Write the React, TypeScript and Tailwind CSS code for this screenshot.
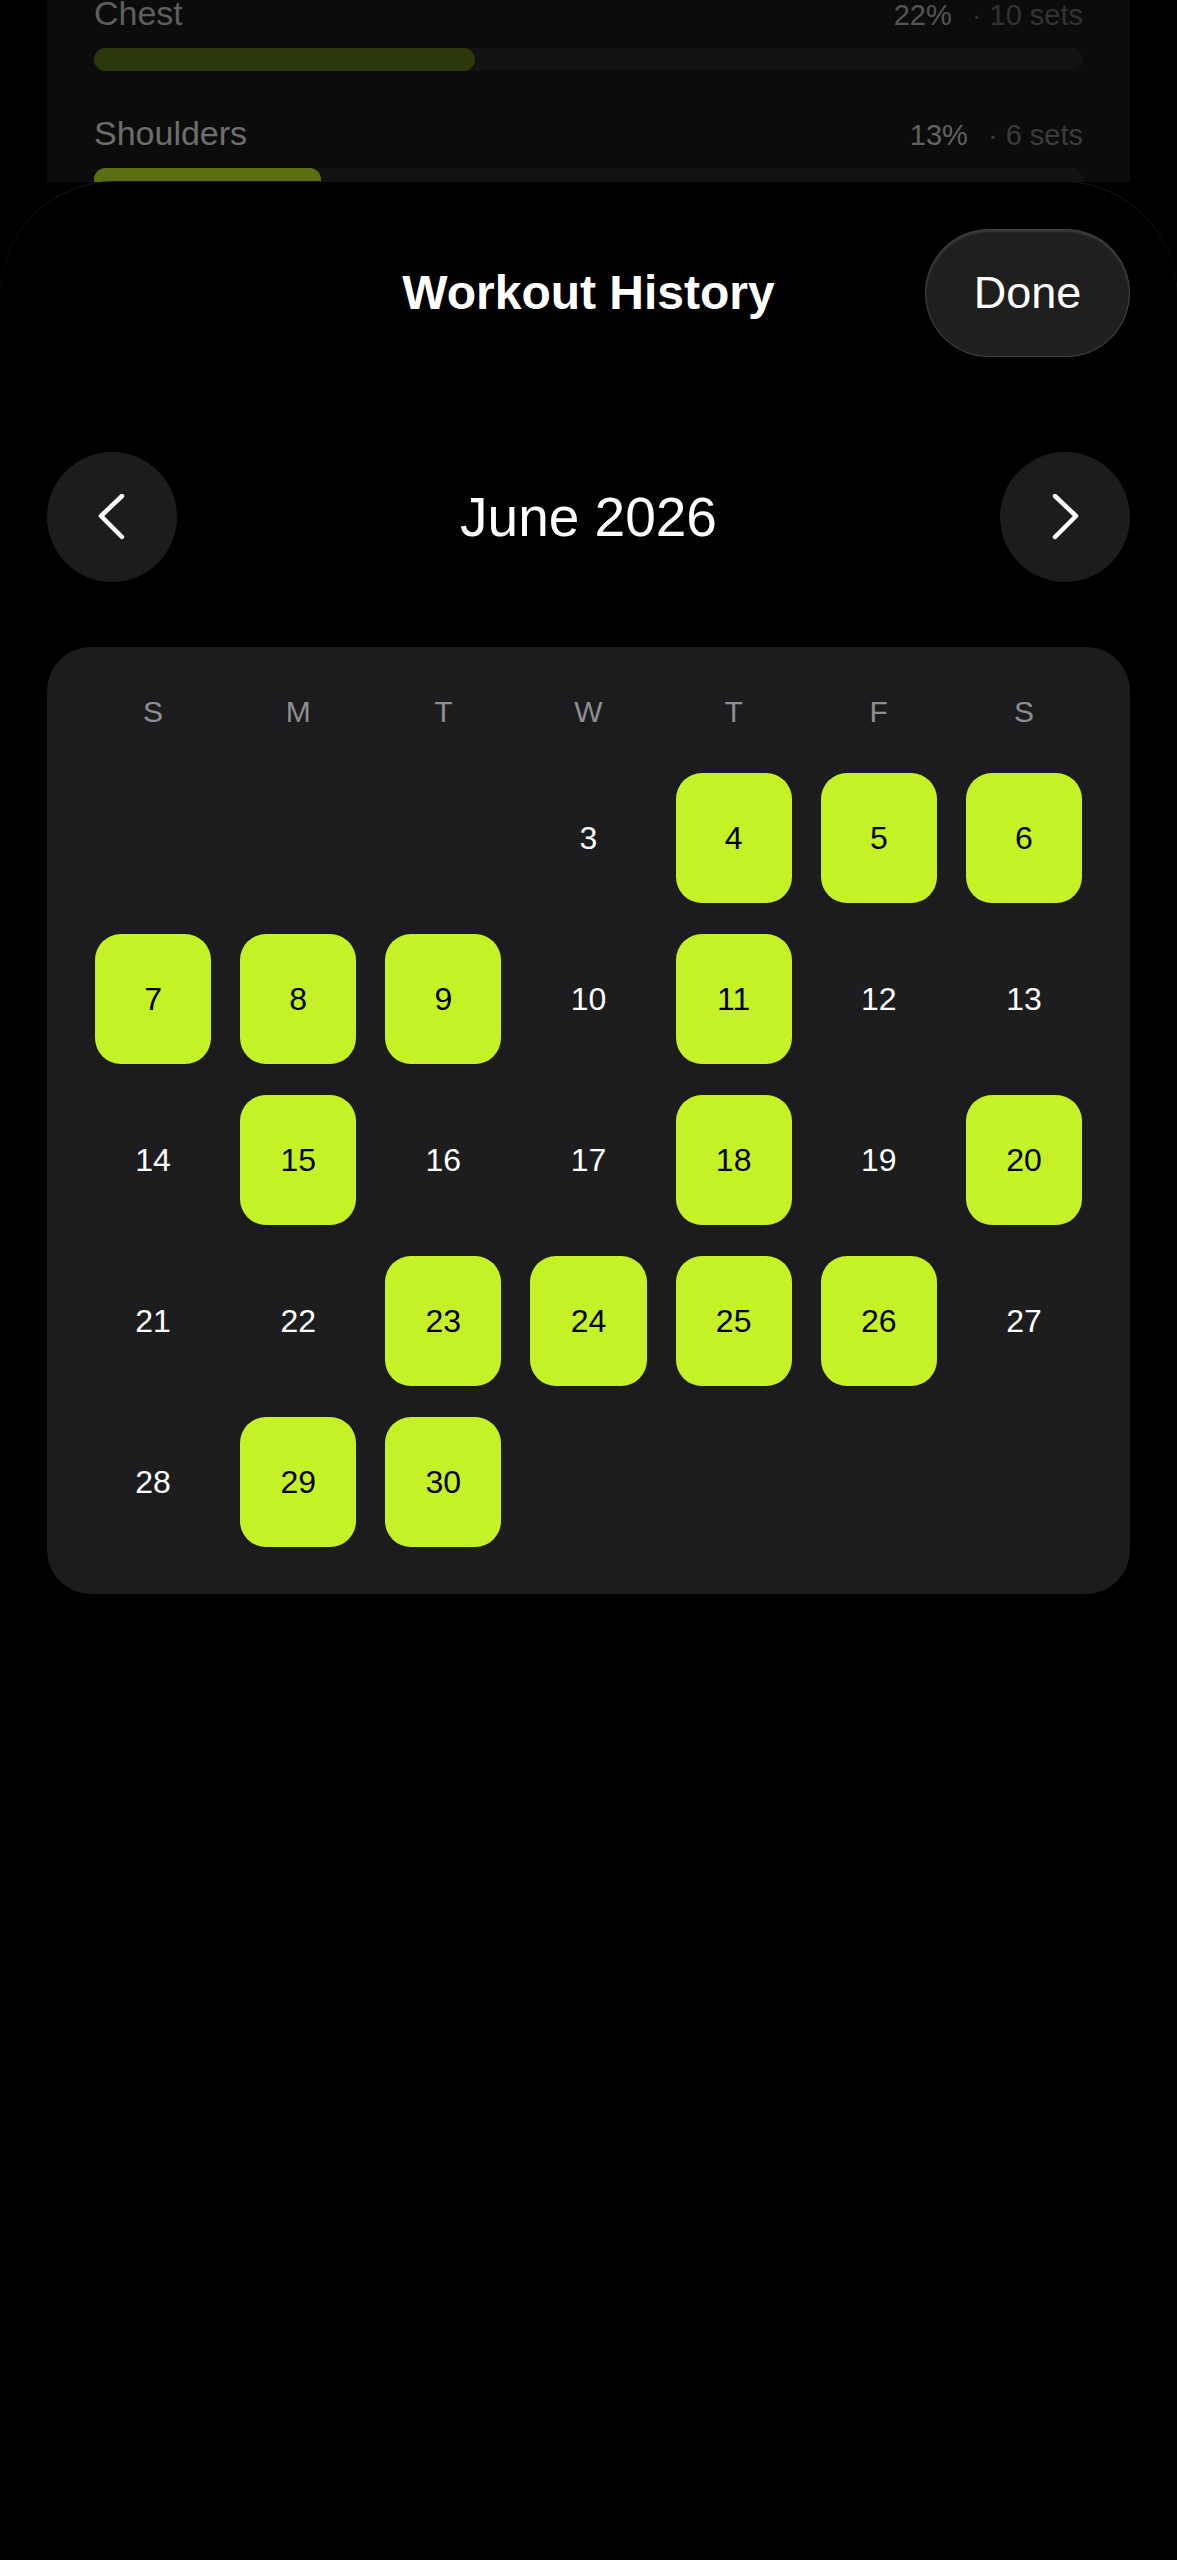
import { type ReactNode } from "react";

const WEEKDAYS = ["S", "M", "T", "W", "T", "F", "S"];

// null = empty slot before the first shown day
const DAYS: (number | null)[] = [
  null, null, null, 3, 4, 5, 6,
  7, 8, 9, 10, 11, 12, 13,
  14, 15, 16, 17, 18, 19, 20,
  21, 22, 23, 24, 25, 26, 27,
  28, 29, 30,
];

const WORKED_OUT = new Set([4, 5, 6, 7, 8, 9, 11, 15, 18, 20, 23, 24, 25, 26, 29, 30]);

const FONT = { fontFamily: "'Liberation Sans', Arial, sans-serif" };

function MuscleRow({
  name,
  pct,
  sets,
  fill,
  colors,
}: {
  name: string;
  pct: string;
  sets: string;
  fill: number;
  colors: { name: string; pct: string; sets: string; bar: string };
}) {
  return (
    <div>
      <div className="flex h-[40px] items-baseline justify-between leading-[40px]">
        <span className={`text-[34px] ${colors.name}`}>{name}</span>
        <span className="flex gap-[20px] text-[29px]">
          <span className={colors.pct}>{pct}</span>
          <span className={colors.sets}>· {sets}</span>
        </span>
      </div>
      <div className="mt-[15px] h-[23px] rounded-full bg-[#121212]">
        <div className={`h-full rounded-full ${colors.bar}`} style={{ width: `${fill}%` }} />
      </div>
    </div>
  );
}

function RoundButton({ children }: { children: ReactNode }) {
  return (
    <button className="flex h-[130px] w-[130px] items-center justify-center rounded-full bg-[#1c1c1e]">
      {children}
    </button>
  );
}

export default function App() {
  return (
    <div className="min-h-[2560px] w-full bg-black text-white" style={FONT}>
      {/* dimmed screen behind the sheet */}
      <div className="h-[182px] overflow-hidden">
        <div className="mx-[47px] -mt-[7px] h-[200px] space-y-[42px] bg-[#0c0c0c] px-[47px]">
          <MuscleRow
            name="Chest"
            pct="22%"
            sets="10 sets"
            fill={38.5}
            colors={{ name: "text-[#5e5e5e]", pct: "text-[#555555]", sets: "text-[#333333]", bar: "bg-[#2d380a]" }}
          />
          <MuscleRow
            name="Shoulders"
            pct="13%"
            sets="6 sets"
            fill={23}
            colors={{ name: "text-[#6e6e6e]", pct: "text-[#626262]", sets: "text-[#3c3c3c]", bar: "bg-[#5b6e11]" }}
          />
        </div>
      </div>

      {/* sheet */}
      <div className="min-h-[2378px] rounded-t-[114px] bg-black px-[47px] pt-[47px] shadow-[0_-1px_0_0_#161616]">
        <div className="grid h-[128px] grid-cols-[1fr_auto_1fr] items-center">
          <div />
          <h1 className="text-[48px] font-bold">Workout History</h1>
          <div className="flex justify-end">
            <button className="flex h-[128px] w-[205px] items-center justify-center rounded-full border border-white/15 bg-[#1f1f1f] text-[45px] shadow-[inset_0_2px_2px_rgba(255,255,255,0.12)]">
              Done
            </button>
          </div>
        </div>

        <div className="mt-[95px] flex items-center justify-between">
          <RoundButton>
            <svg width="28" height="46" viewBox="0 0 28 46" fill="none">
              <polyline points="24,2 3,22 24,43" stroke="white" strokeWidth="4.5" strokeLinecap="round" strokeLinejoin="round" />
            </svg>
          </RoundButton>
          <div className="text-[55px]">June 2026</div>
          <RoundButton>
            <svg width="28" height="46" viewBox="0 0 28 46" fill="none">
              <polyline points="4,2 25,22 4,43" stroke="white" strokeWidth="4.5" strokeLinecap="round" strokeLinejoin="round" />
            </svg>
          </RoundButton>
        </div>

        <div className="mt-[65px] rounded-[44px] bg-[#1c1c1e] px-[48px] pb-[47px] pt-[42px]">
          <div className="grid h-[34px] grid-cols-7 gap-x-[29px]">
            {WEEKDAYS.map((d, i) => (
              <div key={i} className="flex items-center justify-center text-[30px] text-[#8e8e93]">
                {d}
              </div>
            ))}
          </div>
          <div className="mt-[50px] grid grid-cols-7 gap-x-[29px] gap-y-[31px]">
            {DAYS.map((day, i) => {
              if (day === null) return <div key={i} className="h-[130px]" />;
              const active = WORKED_OUT.has(day);
              return (
                <div
                  key={i}
                  className={
                    active
                      ? "flex h-[130px] items-center justify-center rounded-[26px] bg-[#c5f226] text-[32px] text-black"
                      : "flex h-[130px] items-center justify-center rounded-[26px] bg-[#1d1d1f] text-[32px] text-white"
                  }
                >
                  {day}
                </div>
              );
            })}
          </div>
        </div>
      </div>
    </div>
  );
}
